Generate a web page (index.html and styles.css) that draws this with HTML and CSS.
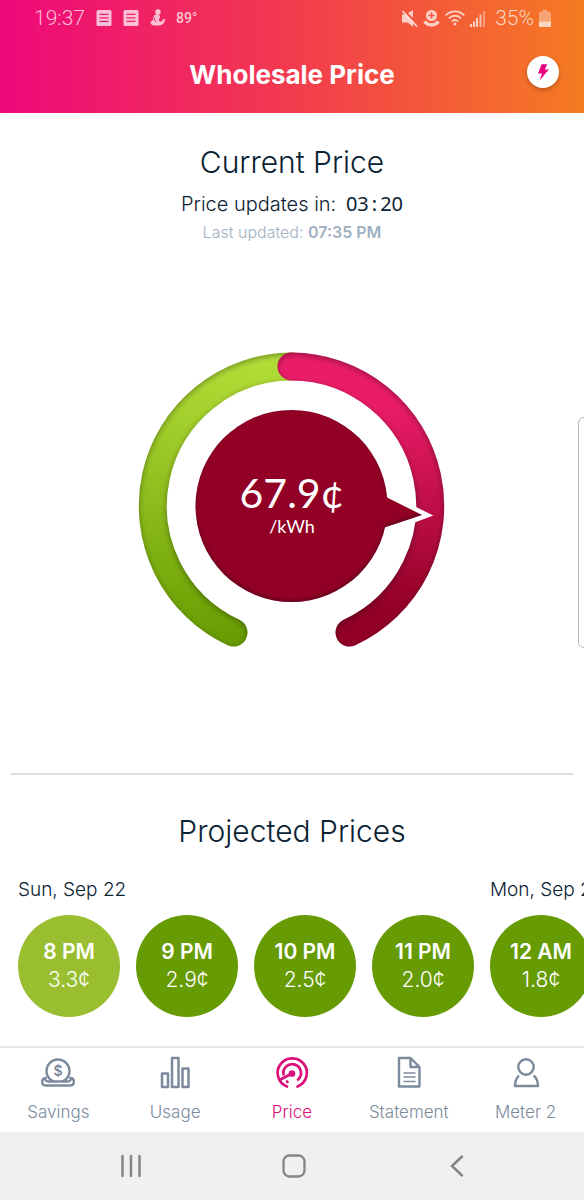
FILE: index.html
```html
<!DOCTYPE html>
<html lang="en">
<head>
    <meta charset="UTF-8">
    <meta name="viewport" content="width=device-width, initial-scale=1.0">
    <title>Wholesale Price</title>
    <link rel="stylesheet" href="styles.css">
</head>
<body>
    <header class="header">
        <div class="status">
            <div class="status-left">
                <span class="status-text">19:37</span>
                <svg width="16" height="16" viewBox="0 0 15 16"><path fill="currentColor" fill-rule="evenodd" d="M1.500 0h12a1.500 1.500 0 0 1 1.500 1.500v13a1.500 1.500 0 0 1-1.500 1.500h-12a1.500 1.500 0 0 1-1.500-1.500v-13a1.500 1.500 0 0 1 1.500-1.500zM3 3.800v1.200h9v-1.200zM3 7.300v1.200h9v-1.200zM3 10.800v1.200h9v-1.200z"/></svg>
                <svg width="16" height="16" viewBox="0 0 15 16"><path fill="currentColor" fill-rule="evenodd" d="M1.500 0h12a1.500 1.500 0 0 1 1.500 1.500v13a1.500 1.500 0 0 1-1.500 1.500h-12a1.500 1.500 0 0 1-1.500-1.500v-13a1.500 1.500 0 0 1 1.500-1.500zM3 3.800v1.200h9v-1.200zM3 7.300v1.200h9v-1.200zM3 10.800v1.200h9v-1.200z"/></svg>
                <svg width="15" height="18" viewBox="0 0 15 18"><circle cx="8" cy="3" r="2.700" fill="currentColor"/><path fill="currentColor" d="M6 5.500c2 0 4 .5 4 2.500 0 1.500-1.500 2-1 3.500.4 1 2 1.500 3.300.5l.2-1.500 2.500-.5c0 4-2.500 6.500-6.500 6.500-3 0-5 .2-6.500-.8-1.500-1-2-2.500-1-3.200l2-1.500c0-2.500 1-5.500 3-5.500z"/><path d="M4.500 8.500c-.5 2 .5 3 2 4.500" fill="none" stroke="#ee256a"/></svg>
                <span class="status-temp">89°</span>
            </div>
            <div class="status-right">
                <svg width="16" height="17" viewBox="0 0 16 17"><path fill="currentColor" d="M0 4.500h3.500L11 12v5l-5-4.500H0zM6 3L11 0v8z"/><path d="M2 1l14 15" stroke="#f3583f" stroke-width="1.500"/><path d="M.5 1l14.500 15.500" stroke="currentColor" stroke-width="1.800"/></svg>
                <svg width="17" height="17" viewBox="0 0 17 17"><circle cx="8.500" cy="5.500" r="5.500" fill="currentColor"/><path d="M5.500 5.500h6M8.500 2.500v6" stroke="#f3583f" stroke-width="1.500"/><path d="M1.500 11.500c3.500 4.500 10.500 4.500 14 0" fill="none" stroke="currentColor" stroke-width="3.500"/></svg>
                <svg width="20" height="16" viewBox="0 0 20 16" fill="none" stroke="currentColor" stroke-width="1.800"><path d="M.7 5.500c5-5.500 13.600-5.500 18.600 0M3.800 8.500c3.500-3.700 8.900-3.700 12.400 0M6.800 11.500c1.900-2 4.500-2 6.400 0"/><circle cx="10" cy="14" r="1.500" fill="currentColor" stroke="none"/></svg>
                <svg width="15" height="17" viewBox="0 0 15 17" fill="currentColor"><path d="M0 14h2v3H0zM3 11.500h2V17H3zM6 8h2v9H6z"/><path opacity=".8" d="M9.500 4.500h2V17h-2z"/><path opacity=".5" d="M13 1h2v16h-2z"/></svg>
                <span class="status-text">35%</span>
                <svg width="12" height="17" viewBox="0 0 12 17" fill="currentColor"><path opacity=".5" d="M3.500 0h5v2H12v9.500H0V2h3.500z"/><path d="M0 11.500h12V17H0z"/></svg>
            </div>
        </div>
        <div class="title-row">
            <h1 class="title">Wholesale Price</h1>
            <button class="bolt" aria-label="Power">
                <svg width="11" height="17" viewBox="0 0 12 18"><path fill="#e6007e" d="M4 0h6L7.500 6l4.500-.5L1.500 18l3-8H0z"/></svg>
            </button>
        </div>
    </header>

    <main class="main">
        <section class="current">
            <h2 class="heading">Current Price</h2>
            <p class="countdown">Price updates in: <span class="timer">03<span class="colon">:</span>20</span></p>
            <p class="updated">Last updated: <strong>07:35 PM</strong></p>
            <svg class="gauge" viewBox="0 0 320 320" role="img" aria-label="67.9¢ per kWh">
                <defs>
                    <linearGradient id="green" gradientUnits="userSpaceOnUse" x1="0" y1="10" x2="0" y2="300">
                        <stop offset="0" stop-color="#b3de38"/>
                        <stop offset="1" stop-color="#669b00"/>
                    </linearGradient>
                    <linearGradient id="pink" gradientUnits="userSpaceOnUse" x1="0" y1="60" x2="0" y2="260">
                        <stop offset="0" stop-color="#ea1c68"/>
                        <stop offset="1" stop-color="#930027"/>
                    </linearGradient>
                    <!-- soft shadow inside the edge of a shape -->
                    <filter id="inset" filterUnits="userSpaceOnUse" x="0" y="0" width="320" height="320" color-interpolation-filters="sRGB">
                        <feOffset in="SourceAlpha" dy="2" result="off"/>
                        <feGaussianBlur in="off" stdDeviation="3" result="blur"/>
                        <feComposite in="SourceAlpha" in2="blur" operator="out" result="edge"/>
                        <feComponentTransfer in="edge" result="shade"><feFuncA type="linear" slope=".35"/></feComponentTransfer>
                        <feMerge><feMergeNode in="SourceGraphic"/><feMergeNode in="shade"/></feMerge>
                    </filter>
                    <filter id="inset-low" filterUnits="userSpaceOnUse" x="0" y="0" width="320" height="320" color-interpolation-filters="sRGB">
                        <feOffset in="SourceAlpha" dy="-2" result="off"/>
                        <feGaussianBlur in="off" stdDeviation="2" result="blur"/>
                        <feComposite in="SourceAlpha" in2="blur" operator="out" result="edge"/>
                        <feComponentTransfer in="edge" result="shade"><feFuncA type="linear" slope=".35"/></feComponentTransfer>
                        <feMerge><feMergeNode in="SourceGraphic"/><feMergeNode in="shade"/></feMerge>
                    </filter>
                </defs>
                <g fill="none" stroke-width="28" stroke-linecap="round">
                    <path filter="url(#inset)" stroke="url(#green)" d="M101.500 286.500A139.500 139.500 0 0 1 159.500 20.500"/>
                    <path filter="url(#inset)" stroke="url(#pink)" d="M159.500 20.500A139.500 139.500 0 0 1 217.500 286.500"/>
                </g>
                <path d="M254 151l36 18-37 14z" fill="#fff" stroke="#fff" stroke-width="9" stroke-miterlimit="6"/>
                <g filter="url(#inset-low)" fill="#930026">
                    <circle cx="159.500" cy="160" r="96"/>
                    <path d="M250 149l40 20-42 14z"/>
                </g>
                <text class="gauge-value" x="160" y="162">67.9¢</text>
                <text class="gauge-unit" x="160" y="187">/kWh</text>
            </svg>
        </section>

        <section class="projected">
            <h2 class="heading">Projected Prices</h2>
            <div class="days">
                <div class="day">
                    <h3 class="date">Sun, Sep 22</h3>
                    <div class="hours">
                        <div class="hour light"><strong>8 PM</strong><span>3.3¢</span></div>
                        <div class="hour"><strong>9 PM</strong><span>2.9¢</span></div>
                        <div class="hour"><strong>10 PM</strong><span>2.5¢</span></div>
                        <div class="hour"><strong>11 PM</strong><span>2.0¢</span></div>
                    </div>
                </div>
                <div class="day">
                    <h3 class="date">Mon, Sep 23</h3>
                    <div class="hours">
                        <div class="hour"><strong>12 AM</strong><span>1.8¢</span></div>
                    </div>
                </div>
            </div>
        </section>
    </main>

    <nav class="tabs">
        <a class="tab" href="#">
            <svg width="36" height="36" viewBox="0 0 36 36"><g fill="none" stroke="currentColor" stroke-width="2.300"><circle cx="18" cy="15" r="11.500"/><path fill="#fff" d="M5.500 22c-4.500 0-4.500 7.500 0 7.500h25c4.500 0 4.500-7.500 0-7.500 1 2.500-1 3.500-3 3.500h-19c-2 0-4-1-3-3.500z"/></g><text class="coin" x="18" y="20">$</text></svg>
            Savings
        </a>
        <a class="tab" href="#">
            <svg width="36" height="36" viewBox="0 0 36 36" fill="none" stroke="currentColor" stroke-width="2.500" stroke-linejoin="round"><path d="M5 17.500h6V31H5zM15 2h6.500v29H15zM25.500 12.500h6V31h-6z"/></svg>
            Usage
        </a>
        <a class="tab active" href="#">
            <svg width="36" height="36" viewBox="0 0 36 36" fill="none" stroke="currentColor" stroke-width="2.700" stroke-linecap="round"><path d="M13 30.500A14.600 14.600 0 1 1 23.500 30.500"/><path d="M9.500 18.500A8.800 8.800 0 1 1 24 23.500"/><path d="M6.500 23.500l11.500-6"/><path d="M13 25.500l.5.500"/><circle cx="18" cy="17.500" r="2" fill="currentColor"/></svg>
            Price
        </a>
        <a class="tab" href="#">
            <svg width="36" height="36" viewBox="0 0 36 36" fill="none" stroke="currentColor" stroke-width="2.400" stroke-linejoin="round"><path d="M8 2h11.500l9 9v19.500H8zM19.500 2v9h9"/><path stroke-width="1.500" d="M12.500 17h12M12.500 21h12M12.500 25.500h12"/></svg>
            Statement
        </a>
        <a class="tab" href="#">
            <svg width="36" height="36" viewBox="0 0 36 36" fill="none" stroke="currentColor" stroke-width="2.400" stroke-linejoin="round"><circle cx="18" cy="11" r="7.700"/><path d="M11 19.500c-2.500 2.500-4 5.500-4 10.500h23c0-5-1.500-8-4.500-10.500"/></svg>
            Meter 2
        </a>
    </nav>

    <div class="navbar">
        <button class="nav-btn" aria-label="Recents">
            <svg width="26" height="26" viewBox="0 0 26 26"><path d="M4.500 3v20M13 3v20M21.500 3v20" stroke="currentColor" stroke-width="2.500" stroke-linecap="round"/></svg>
        </button>
        <button class="nav-btn" aria-label="Home">
            <svg width="26" height="26" viewBox="0 0 26 26"><rect x="2.500" y="2.500" width="21" height="21" rx="6" fill="none" stroke="currentColor" stroke-width="2.300"/></svg>
        </button>
        <button class="nav-btn" aria-label="Back">
            <svg width="26" height="26" viewBox="0 0 26 26"><path d="M18 3.500L8 13l10 9.500" fill="none" stroke="currentColor" stroke-width="2.500" stroke-linecap="round"/></svg>
        </button>
    </div>

    <div class="edge-handle"></div>
</body>
</html>
```
FILE: styles.css
```css
* {
    box-sizing: border-box;
}

body {
    margin: 0;
    min-height: 100vh;
    display: flex;
    flex-direction: column;
    position: relative;
    overflow-x: hidden;
    background: #fff;
    color: #0b2233;
    font-family: Inter, "Liberation Sans", sans-serif;
    font-weight: 300;
}

h1, h2, h3, p {
    margin: 0;
}

svg {
    display: block;
}

/* Header */
.header {
    height: 113px;
    color: #fff;
    background: linear-gradient(90deg, #ee087b, #f23b4e 50%, #f57b22);
}

.status {
    display: flex;
    justify-content: space-between;
    height: 36px;
    padding: 0 33px 0 34px;
    color: rgba(255, 255, 255, 0.72);
    font-family: Roboto, sans-serif;
}

.status-left,
.status-right {
    display: flex;
    align-items: center;
}

.status-left {
    gap: 11px;
}

.status-right {
    gap: 5px;
}

.status-right .status-text {
    margin-left: 5px;
}

.status-text {
    font-size: 21px;
}

.status-temp {
    font-size: 14px;
    font-weight: 500;
}

.title-row {
    display: grid;
    grid-template-columns: 1fr auto 1fr;
    align-items: center;
    height: 72px;
    padding: 0 25px;
}

.title {
    grid-column: 2;
    padding-top: 4px;
    font-size: 26px;
    font-weight: 700;
}

.bolt {
    justify-self: end;
    display: grid;
    place-items: center;
    width: 32px;
    height: 32px;
    padding: 0;
    border: none;
    border-radius: 50%;
    background: #fff;
    box-shadow: 0 2px 4px rgba(0, 0, 0, 0.25);
}

/* Current price */
.main {
    flex: 1;
}

.current {
    display: flex;
    flex-direction: column;
    align-items: center;
    margin: 0 11px;
    padding: 30px 0 107px;
    border-bottom: 2px solid #d8e0e8;
}

.heading {
    font-size: 30px;
    font-weight: 300;
    line-height: 38px;
    text-align: center;
}

.countdown {
    margin-top: 9px;
    font-size: 20px;
    line-height: 28px;
}

.timer {
    margin-left: 4px;
    font-family: "Noto Sans", sans-serif;
    font-weight: 400;
}

.colon {
    margin: 0 3px;
}

.updated {
    color: #9fb1c2;
    font-size: 16px;
    line-height: 28px;
}

.updated strong {
    font-weight: 600;
}

.gauge {
    width: 320px;
    margin-top: 100px;
}

.gauge-value,
.gauge-unit {
    fill: #fff;
    text-anchor: middle;
    font-family: Lato, sans-serif;
    font-weight: 400;
}

.gauge-value {
    font-size: 41px;
}

.gauge-unit {
    font-size: 18px;
}

/* Projected prices */
.projected {
    padding-top: 37px;
    overflow: hidden;
}

.days {
    display: flex;
    gap: 16px;
    margin-top: 26px;
    padding: 0 18px 27px;
}

.date {
    margin-bottom: 11px;
    font-size: 19px;
    font-weight: 300;
    line-height: 28px;
    white-space: nowrap;
}

.hours {
    display: flex;
    gap: 16px;
}

.hour {
    display: flex;
    flex-direction: column;
    align-items: center;
    justify-content: center;
    flex: none;
    width: 102px;
    height: 102px;
    border-radius: 50%;
    background: #679b04;
    color: #fff;
    font-size: 21px;
    line-height: 28px;
}

.hour strong {
    font-weight: 600;
}

.hour.light {
    background: #99bf30;
}

/* Tab bar */
.tabs {
    display: flex;
    height: 86px;
    border-top: 2px solid #e3e8ed;
}

.tab {
    flex: 1;
    display: flex;
    flex-direction: column;
    align-items: center;
    padding-top: 8px;
    color: #7b8b9d;
    font-size: 17px;
    line-height: 40px;
    text-decoration: none;
}

.tab.active {
    color: #dc107b;
}

.coin {
    fill: currentColor;
    font-size: 14px;
    font-weight: 600;
    text-anchor: middle;
}

/* System navigation */
.navbar {
    display: flex;
    height: 68px;
    padding: 0 46px 0 50px;
    background: #f0f0f0;
}

.nav-btn {
    flex: 1;
    display: grid;
    place-items: center;
    padding: 0;
    border: none;
    background: none;
    color: #858585;
}

.edge-handle {
    position: absolute;
    top: 417px;
    right: -6px;
    width: 12px;
    height: 231px;
    border: 1px solid #b5b5b5;
    border-radius: 8px;
    background: #fff;
}
```
